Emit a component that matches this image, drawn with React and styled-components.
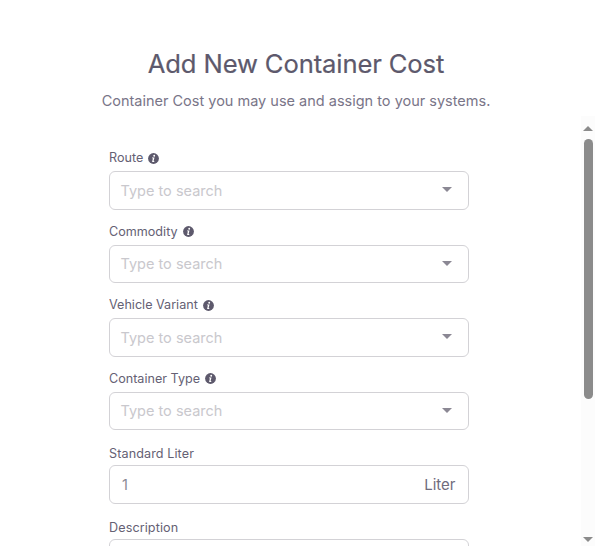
import React from "react";
import styled, { createGlobalStyle } from "styled-components";

const searchFields = ["Route", "Commodity", "Vehicle Variant", "Container Type"];

function InfoIcon(){
    return(
        <InfoSvg viewBox="0 0 11 11">
            <circle cx="5.5" cy="5.5" r="5.4" fill="#5d596c"/>
            <circle cx="6.2" cy="2.7" r="0.95" fill="#fff"/>
            <path d="M4.1 4.5H6.5L5.6 8H6.4L6.1 8.9H4.1L4.9 5.3H3.9Z" fill="#fff"/>
        </InfoSvg>
    )
}

function SearchField({ label }){
    return(
        <Field>
            <Label>{label}<InfoIcon/></Label>
            <Control>
                <Placeholder>Type to search</Placeholder>
                <Caret viewBox="0 0 10 5"><path d="M0 0H10L5 5Z"/></Caret>
            </Control>
        </Field>
    )
}

export default function App(){
    return(
        <>
        <GlobalStyle/>
        <Modal>
            <Header>
                <Title>Add New Container Cost</Title>
                <Subtitle>Container Cost you may use and assign to your systems.</Subtitle>
            </Header>
            <Body>
                <Form>
                    {searchFields.map((label) => <SearchField key={label} label={label}/>)}
                    <Field>
                        <Label $plain>Standard Liter</Label>
                        <Control>
                            <Value>1</Value>
                            <Unit>Liter</Unit>
                        </Control>
                    </Field>
                    <Field>
                        <Label $plain>Description</Label>
                        <Control/>
                    </Field>
                </Form>
                <ScrollTrack>
                    <Arrow viewBox="0 0 10 5"><path d="M0 5H10L5 0Z"/></Arrow>
                    <Thumb/>
                    <Arrow viewBox="0 0 10 5"><path d="M0 0H10L5 5Z"/></Arrow>
                </ScrollTrack>
            </Body>
        </Modal>
        </>
    )
}

const GlobalStyle = createGlobalStyle`
*{
    box-sizing : border-box;
}
body{
    margin : 0;
    overflow : hidden;
    background-color : #fff;
    color : #6f6b7d;
    font-family : Inter, "Liberation Sans", sans-serif;
}
`
const Modal = styled.div`
width : 100%;
height : 546px;
display : flex;
flex-direction : column;
overflow : hidden;
`
const Header = styled.div`
height : 116px;
flex-shrink : 0;
padding : 46px 3px 0 0;
text-align : center;
white-space : nowrap;
`
const Title = styled.h3`
margin : 0;
color : #5d596c;
font-size : 25.6px;
font-weight : 400;
line-height : 36px;
letter-spacing : -0.12px;
-webkit-text-stroke : 0.2px #5d596c;
`
const Subtitle = styled.p`
margin : 8px 0 0;
color : #797588;
font-size : 14.5px;
line-height : 22px;
`
const Body = styled.div`
flex : 1;
min-height : 0;
display : flex;
justify-content : space-between;
`
const Form = styled.form`
width : 360px;
margin-left : 109px;
padding-top : 32px;
overflow : hidden;
`
const Field = styled.div`
height : 73.55px;
`
const Label = styled.label`
height : 23px;
display : flex;
align-items : center;
gap : ${(props) => props.$plain ? "0" : "5px"};
padding-top : ${(props) => props.$plain ? "1px" : "0"};
padding-bottom : ${(props) => props.$plain ? "0" : "3px"};
color : #656174;
font-size : 12.6px;
line-height : 18px;
letter-spacing : ${(props) => props.$plain ? "0.1px" : "0"};
`
const InfoSvg = styled.svg`
width : 11px;
height : 11px;
`
const Control = styled.div`
height : 38.5px;
display : flex;
align-items : center;
justify-content : space-between;
padding : 1px 12px 0 11px;
border : 1px solid #d3d2d6;
border-radius : 6px;
font-size : 14.5px;
line-height : 22px;
`
const Placeholder = styled.span`
margin-left : -0.5px;
color : #c9c8cd;
`
const Caret = styled.svg`
width : 10px;
height : 5px;
margin-right : 4px;
margin-bottom : 2px;
fill : #8b8894;
`
const Value = styled.span`
margin-left : 1px;
color : #8b8894;
`
const Unit = styled.span`
margin-right : 0.5px;
font-size : 15px;
color : #6f6b7d;
`
const ScrollTrack = styled.div`
width : 14px;
display : flex;
flex-direction : column;
align-items : center;
padding : 10px 0 4px;
background-color : #fcfcfc;
`
const Arrow = styled.svg`
width : 10px;
height : 5px;
flex-shrink : 0;
fill : #8b8b8b;
`
const Thumb = styled.div`
width : 9px;
height : 260px;
margin : 8px 0 auto;
border-radius : 5px;
background-color : #8b8b8b;
`
